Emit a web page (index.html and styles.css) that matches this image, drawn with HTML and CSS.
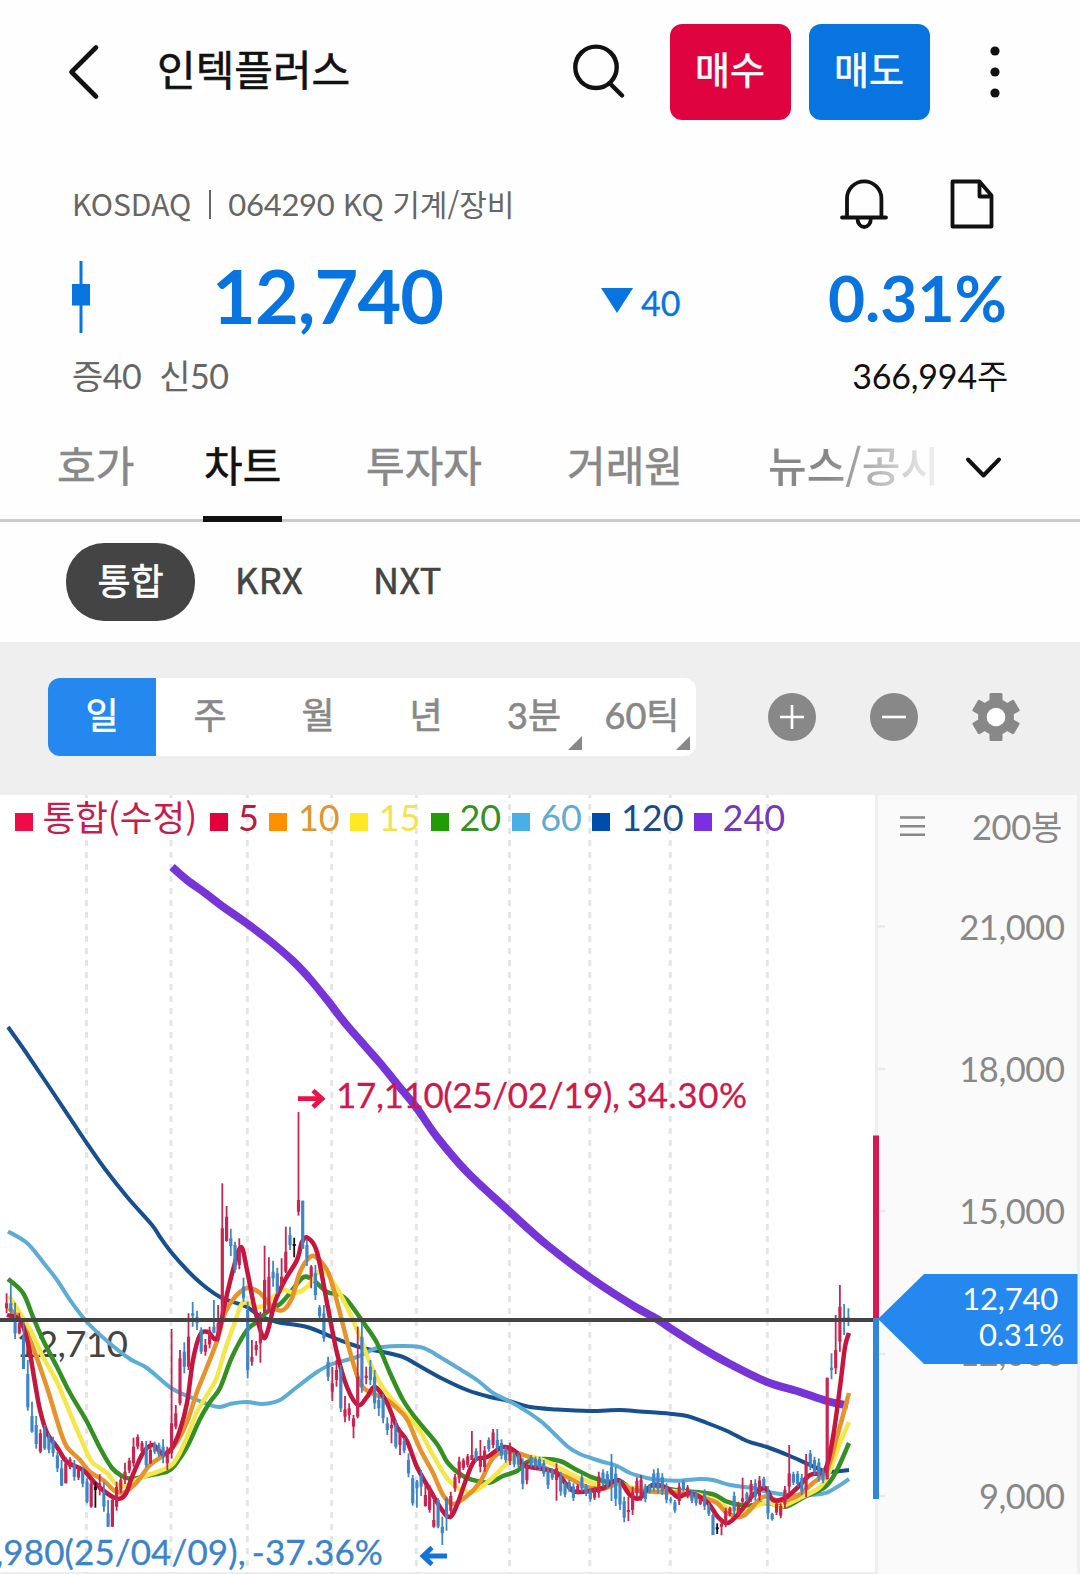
FILE: index.html
```html
<!DOCTYPE html>
<html lang="ko">
<head>
<meta charset="utf-8">
<title>인텍플러스</title>
<link rel="stylesheet" href="styles.css">
</head>
<body>
<header class="topbar">
  <svg class="back" width="32" height="56" viewBox="0 0 32 56"><path d="M28 3.500 3.500 28 28 52.500"/></svg>
  <h1 class="title">인텍플러스</h1>
  <svg class="search" width="54" height="56" viewBox="0 0 54 56"><circle cx="25" cy="23.300" r="20.700"/><path d="M38.500 39 51 51.500"/></svg>
  <button class="trade buy">매수</button>
  <button class="trade sell">매도</button>
  <svg class="more" width="10" height="54" viewBox="0 0 10 54"><circle cx="5" cy="6" r="4.600"/><circle cx="5" cy="27" r="4.600"/><circle cx="5" cy="48" r="4.600"/></svg>
</header>

<section class="quote">
  <div class="meta">
    <span class="market">KOSDAQ</span><i class="bar"></i><span><span class="num">064290</span> KQ 기계/장비</span>
    <div class="meta-icons">
      <svg width="48" height="52" viewBox="0 0 48 52"><path d="M7 39.500V20.500a17.200 17.200 0 0 1 34.400 0V39.500M2 39.500H46M17.500 40.500c0 5 3 8.500 6.700 8.500s6.700-3.500 6.700-8.500"/></svg>
      <svg width="44" height="52" viewBox="0 0 44 52"><path d="M2.500 3.500H29.500L41.500 17.500V48.500H2.500ZM29.500 3.500V18.500H41.500"/></svg>
    </div>
  </div>
  <div class="price-row">
    <svg class="candle" width="18" height="72" viewBox="0 0 18 72"><path d="M7.500 0h3v23h7.500v21.500h-7.500V72h-3V44.500H0V23h7.500z"/></svg>
    <span class="price">12,740</span>
    <span class="change"><svg width="32" height="25" viewBox="0 0 32 25"><path d="M0 0h32L16 25z"/></svg>40</span>
    <span class="rate">0.31%</span>
  </div>
  <div class="volume-row">
    <span class="margin"><span>증<b>40</b></span><span>신<b>50</b></span></span>
    <span class="volume"><b>366,994</b>주</span>
  </div>
</section>

<nav class="tabs">
  <a class="tab t1">호가</a>
  <a class="tab t2 active">차트</a>
  <a class="tab t3">투자자</a>
  <a class="tab t4">거래원</a>
  <a class="tab t5 fade">뉴스/공시</a>
  <svg class="expand" width="38" height="24" viewBox="0 0 38 24"><path d="M3 3.500 18.500 19.500 34 3.500"/></svg>
</nav>

<div class="exchanges">
  <span class="pill">통합</span><span class="ex krx">KRX</span><span class="ex nxt">NXT</span>
</div>

<div class="toolbar">
  <div class="periods">
    <span class="on">일</span><span>주</span><span>월</span><span>년</span>
    <span class="drop"><b>3</b>분</span><span class="drop"><b>60</b>틱</span>
  </div>
  <svg width="48" height="48" viewBox="0 0 48 48"><circle cx="24" cy="24" r="24" fill="#888"/><path d="M12 24H36M24 12V36" stroke="#fff" stroke-width="2.600"/></svg>
  <svg width="48" height="48" viewBox="0 0 48 48"><circle cx="24" cy="24" r="24" fill="#888"/><path d="M12 24H36" stroke="#fff" stroke-width="2.600"/></svg>
  <svg width="48" height="48" viewBox="0 0 48 48"><g fill="#888"><circle cx="24" cy="24" r="18"/><g id="tooth"><path d="M17.500 1.500q0-1.500 1.500-1.500h10q1.500 0 1.500 1.500V8H17.500z"/><path d="M17.500 46.500q0 1.500 1.500 1.500h10q1.500 0 1.500-1.500V40H17.500z"/></g><use href="#tooth" transform="rotate(60 24 24)"/><use href="#tooth" transform="rotate(120 24 24)"/></g><circle cx="24" cy="24" r="9.300" fill="#fff"/></svg>
</div>

<main class="chart">
  <svg class="plot" width="1080" height="779" viewBox="0 795 1080 779">
    <rect x="878" y="795" width="199" height="779" fill="#fafafa"/>
    <path d="M876.500 795V1574M1078.500 795V1574" stroke="#efefef" stroke-width="3.200"/>
    <path d="M0 1573H875" stroke="#eee" stroke-width="2"/>
    <path d="M878 926.500h7M878 1069h7M878 1211h7M878 1354h7M878 1496h7" stroke="#e9e9e9" stroke-width="2.500"/>
    <path class="grid" d="M86.500 792V1574M171 792V1574M247.300 792V1574M331.700 792V1574M416.300 792V1574M509.400 792V1574M589.800 792V1574M670.200 792V1574M767.300 792V1574"/>
    <text class="last" x="16" y="1357" textLength="112">12,710</text>
    <g id="averages"></g>
    <g id="candles"></g>
    <path d="M0 1320H876" stroke="#444" stroke-width="4"/>
    <path d="M876 1135.500V1318" stroke="#d8174f" stroke-width="6"/>
    <path d="M876 1318V1499" stroke="#3086d8" stroke-width="6"/>
    <path d="M298 1098.700H321M313 1090.500 322 1098.700 313 1107" fill="none" stroke="#ea1348" stroke-width="4.800"/>
    <text class="mark up" y="1108"><tspan x="336" textLength="284">17,110(25/02/19),</tspan><tspan x="627" textLength="120">34.30%</tspan></text>
    <path d="M447 1556H424M432 1547.500 423 1556 432 1564.500" fill="none" stroke="#1273dc" stroke-width="4.800"/>
    <text class="mark down" x="383" y="1564.500" text-anchor="end">7,980(25/04/09), -37.36%</text>
    <g class="axis">
      <text x="1064.500" y="939.500">21,000</text>
      <text x="1064.500" y="1081.500">18,000</text>
      <text x="1064.500" y="1223.500">15,000</text>
      <text x="1064.500" y="1366">12,000</text>
      <text x="1064.500" y="1508.500">9,000</text>
      <text x="1062" y="840">200<tspan class="kr">봉</tspan></text>
    </g>
    <path d="M900 817.500h25M900 826.200h25M900 834.800h25" stroke="#888" stroke-width="2.500"/>
    <path d="M878 1319 924 1274H1077.500V1364H924Z" fill="#2488ee"/>
    <text class="tag" x="1058" y="1310">12,740</text>
    <text class="tag" x="1064" y="1346">0.31%</text>
  </svg>
  <div class="legend">
    <span class="c0 kr">통합(수정)</span><span class="c5">5</span><span class="c10">10</span><span class="c15">15</span><span class="c20">20</span><span class="c60">60</span><span class="c120">120</span><span class="c240">240</span>
  </div>
</main>
<script src="chart.js"></script>
</body>
</html>
```
FILE: styles.css
```css
* { box-sizing: border-box; }
body {
  margin: 0;
  width: 1080px;
  height: 1574px;
  overflow: hidden;
  background: #fefefe;
  color: #111;
  font-family: "Noto Sans CJK KR", sans-serif;
}
svg { display: block; flex: none; }
b, .num { font-family: Lato, sans-serif; font-weight: inherit; }

/* Medium weight: the regular face with a thin outline */
.title, .trade, .tabs, .exchanges, .periods { font-weight: 400; -webkit-text-stroke: 0.600px; }

.topbar { display: flex; align-items: center; height: 144px; padding-left: 68px; }
.back, .search { fill: none; stroke: #111; stroke-width: 4.600; stroke-linecap: round; stroke-linejoin: round; }
.title { margin: 0 0 8px 57px; width: 414px; font-size: 42px; line-height: 60px; white-space: nowrap; }
.search { stroke-width: 4.400; }
.trade {
  width: 121px; height: 96px; padding: 0 1px 9px 0; border: 0; border-radius: 12px;
  color: #fff; font-size: 38px; font-family: "Noto Sans CJK KR", sans-serif;
}
.buy { margin-left: 45px; background: #df043f; }
.sell { margin-left: 18px; background: #0774e0; }
.more { margin-left: 60px; fill: #111; }

.quote { height: 286px; padding: 33px 73px 0 72px; }
.meta { display: flex; align-items: center; height: 54px; font-size: 30px; color: #666; white-space: nowrap; }
.meta > span { margin-top: -3px; }
.bar { width: 2px; height: 29px; margin: 0 17px 0 18px; background: #666; }
.meta-icons { display: flex; gap: 62px; margin-left: auto; margin-right: 13px; }
.num { font-size: 31px; letter-spacing: -0.300px; }
.meta-icons svg { fill: none; stroke: #111; stroke-width: 3.800; stroke-linecap: round; stroke-linejoin: round; }

.price-row { display: flex; align-items: center; height: 96px; margin-top: 16px; color: #0774e0; font-family: Lato, sans-serif; line-height: 1; }
.candle { margin-top: 3px; fill: #0774e0; }
.price { width: 389px; margin-left: 122px; font-size: 75.500px; font-weight: 700; letter-spacing: -0.900px; }
.change { display: flex; align-items: center; gap: 8px; margin-top: 15px; font-size: 34px; -webkit-text-stroke: 0.300px; }
.change svg { margin-top: -4px; fill: #0774e0; }
.rate { margin-left: auto; margin-top: 5px; font-size: 64px; font-weight: 700; }

.volume-row { display: flex; justify-content: space-between; height: 60px; margin-top: 4px; line-height: 56px; font-size: 34px; }
.margin { display: flex; gap: 18px; color: #666; letter-spacing: -0.500px; }
.volume { letter-spacing: -0.200px; margin-right: -1px; }

.tabs { position: relative; display: flex; height: 92px; border-bottom: 3px solid #ccc; padding-left: 57px; font-size: 42px; line-height: 67px; color: #888; white-space: nowrap; }
.tab { height: 92px; }
.t1 { width: 146px; }
.t2 { width: 79px; margin-right: 84px; padding-left: 1px; color: #111; border-bottom: 6px solid #111; }
.t3 { width: 201px; }
.t4 { width: 201px; }
.fade { width: 170px; font-weight: 500; color: transparent; -webkit-text-stroke: 0; background: linear-gradient(90deg, #888 35%, #f2f2f2 100%); -webkit-background-clip: text; background-clip: text; }
.expand { margin: 26px 0 0 27px; fill: none; stroke: #111; stroke-width: 4; stroke-linecap: round; stroke-linejoin: round; }

.exchanges { display: flex; align-items: center; height: 120px; padding: 0 66px 0; font-size: 36px; color: #444; }
.pill { width: 129px; height: 78px; border-radius: 38px; background: #444; color: #fff; line-height: 72px; text-align: center; }
.ex { line-height: 72px; padding-bottom: 8px; letter-spacing: 0.500px; }
.krx { width: 138px; margin-left: 40px; }

.toolbar { display: flex; align-items: center; height: 153px; padding: 0 0 3px 48px; background: #efefef; }
.periods { display: flex; width: 648px; height: 78px; margin-right: 72px; border-radius: 12px; overflow: hidden; background: #fff; color: #888; font-size: 36px; line-height: 71px; text-align: center; }
.periods span { position: relative; flex: 1; }
.periods .on { background: #2488ee; color: #fff; }
.drop::after { content: ""; position: absolute; right: 6px; bottom: 6px; border: 7px solid transparent; border-right-color: #888; border-bottom-color: #888; }
.toolbar > svg + svg { margin-left: 54px; }

.chart { position: relative; height: 779px; background: #fff; }
.grid { fill: none; stroke: #e5e5e5; stroke-width: 3; stroke-dasharray: 6 6; }
.plot text { font-family: Lato, sans-serif; }
.plot .kr { font-family: "Noto Sans CJK KR", sans-serif; }
.last { font-size: 37px; fill: #444; }
.mark { font-size: 35px; stroke-width: 0.300; word-spacing: -3px; }
.up { fill: #cb1b4c; stroke: #cb1b4c; }
.down { fill: #3c83c8; stroke: #3c83c8; letter-spacing: 0.100px; }
.axis { font-size: 34.500px; fill: #888; text-anchor: end; letter-spacing: -0.450px; }
.tag { font-size: 31px; fill: #fff; text-anchor: end; letter-spacing: -0.200px; }
#averages path { fill: none; stroke-width: 4; stroke-linejoin: round; }

.legend { position: absolute; left: 15px; top: 0; display: flex; gap: 10.500px; height: 48px; line-height: 45px; font-family: Lato, sans-serif; font-size: 36px; white-space: nowrap; }
.legend span { display: flex; align-items: flex-start; gap: 10.500px; letter-spacing: 0; }
.legend span::before { content: ""; width: 18px; height: 18px; margin-top: 18px; background: var(--sq, currentColor); }
.legend .kr { width: 184px; gap: 9.500px; font-family: "Noto Sans CJK KR", sans-serif; font-size: 35.500px; line-height: 41px; }
.c0 { color: #c41e4e; --sq: #ee0b48; }
.c5 { color: #b91c42; --sq: #e2003b; }
.c10 { color: #e0962f; --sq: #ff9100; }
.c15 { color: #f2e44e; --sq: #ffe924; }
.c20 { color: #359023; --sq: #229c06; }
.c60 { color: #5fabd3; --sq: #48b0e4; }
.c120 { color: #184c8a; --sq: #004cab; }
.c240 { color: #7438bb; --sq: #7a30e0; }
```
FILE: chart.js
```js
const NS = 'http://www.w3.org/2000/svg';

function add(parent, d, stroke, width) {
  const p = document.createElementNS(NS, 'path');
  p.setAttribute('d', d);
  p.setAttribute('stroke', stroke);
  p.style.strokeWidth = width;
  parent.appendChild(p);
}

// Smooth curve through the points (Catmull-Rom as cubic segments).
function smooth(text) {
  const p = text.trim().split(/\s+/).map(s => s.split(',').map(Number));
  let d = 'M' + p[0];
  for (let i = 0; i < p.length - 1; i++) {
    const a = p[i - 1] || p[i], b = p[i], c = p[i + 1], e = p[i + 2] || c;
    d += 'C' + [b[0] + (c[0] - a[0]) / 6, b[1] + (c[1] - a[1]) / 6,
      c[0] - (e[0] - b[0]) / 6, c[1] - (e[1] - b[1]) / 6, c[0], c[1]].map(v => v.toFixed(1));
  }
  return d;
}

const averages = [
  ['#7734d6', 8, '172,867 187,880 205,893 222,906 247,923.5 270,941 293,961 310,979 328,1001 345,1023 365,1046 380,1063 397,1084 416,1107 437,1137 467,1172 510,1212 547,1245 592,1279 632,1305 657,1319 670,1328 700,1347 730,1364 767,1382 800,1392 827,1401 848,1405.5'],
  ['#174f8f', 4, '8,1027 25,1051 50,1088 86,1142 105,1169 128,1198 152,1225 160,1237 171,1252 187,1270 203,1285 220,1297 233,1302 247,1307 260,1316 277,1322 307,1327 332,1337 350,1344 367,1349 383,1352 403,1357 416,1364 443,1379 467,1390 490,1397 509,1401 530,1407 557,1409.5 590,1411 620,1410 640,1411.5 670,1413.7 687,1416 707,1423 727,1431 747,1441 767,1447 790,1456 810,1465 827,1471.5 849,1470'],
  ['#5dacd6', 4, '8,1231.5 27,1243 43,1262 57,1280 70,1300 86,1321 107,1341 130,1359 147,1368 171,1388 190,1397 210,1405 220,1407 232,1403.5 247,1402 263,1404 280,1400 297,1387 317,1372 332,1364 357,1357 377,1348 400,1346 420,1347 430,1351 440,1357 458,1368 477,1380 493,1393 509,1401 523,1409 543,1423 567,1446 580,1454 600,1461 617,1466 630,1473 647,1478 660,1480 680,1480.7 700,1479 713,1480 730,1485 753,1488 767,1491.7 790,1495 817,1494.5 827,1492.5 837,1487 849,1479'],
  ['#359023', 4.5, '8,1279 23,1293 33,1317 43,1340 57,1367 70,1393 86,1420 100,1448 112,1468 122,1476 132,1479 147,1475.7 167,1471.7 175,1465 187,1447 200,1419 210,1402 220,1388 232,1357 247,1330 257,1322 267,1312 280,1304 290,1293 303,1277.5 313,1280 327,1292 338,1294 347,1300 363,1322 377,1343 390,1373 403,1400 417,1420 437,1444 448,1463 463,1476 477,1481 490,1482.5 503,1476 517,1471 527,1462 543,1459 560,1461 577,1470 593,1477.7 607,1481.7 620,1481 630,1487.7 643,1489 657,1487.5 680,1490.7 712,1494 727,1501.7 747,1505.7 767,1502.7 785,1506.7 803,1497.7 825,1487 837,1470 849,1443'],
  ['#f5e64a', 4.5, '9,1296 20,1313 32,1333 43,1357 57,1382 72,1418 87,1453 93,1463 107,1473 115,1483 125,1486 140,1478 167,1468 177,1458 187,1437 197,1412 210,1390 217,1377 225,1350 235,1322 243,1303 260,1307 272,1298 283,1290 295,1293 307,1287 317,1273 325,1272 333,1282 347,1307 360,1337 370,1363 383,1388 400,1408 418,1428 433,1455 447,1478 460,1489 473,1492 490,1480 507,1463 515,1456 533,1457 550,1463 567,1472 587,1481 607,1487 620,1484 633,1488 653,1490 673,1491 700,1495 717,1502 730,1509 747,1510 767,1502 780,1507 800,1498 820,1487 830,1470 840,1443 849,1422'],
  ['#e5932a', 4.5, '9,1308 20,1320 30,1340 40,1367 50,1397 60,1430 67,1447 80,1460 90,1472 103,1480 115,1491 125,1492 137,1482 150,1465 167,1453 177,1442 187,1422 197,1392 207,1367 217,1341 225,1313 235,1297 247,1288 260,1293 272,1307 283,1310 292,1298 300,1272 310,1257 317,1258 327,1270 333,1287 340,1313 350,1352 360,1383 370,1392 387,1400 400,1411 408,1421 420,1449 433,1473 443,1495 453,1504 467,1496 480,1482 493,1458 507,1452 527,1456 543,1467 567,1477 587,1487 603,1489 620,1483 633,1490 660,1492 677,1493 703,1498 717,1503 727,1513 743,1516 763,1497 780,1501 797,1496 813,1483 827,1470 837,1437 849,1393'],
  ['#c4163f', 4.5, '7,1315 20,1320 28,1343 35,1383 40,1410 47,1433 57,1447 67,1462 83,1470 97,1485 115,1498 125,1495 132,1477 143,1453 153,1445 163,1454 172,1448 180,1430 187,1403 193,1360 200,1335 208,1332 217,1338 225,1303 233,1270 241,1247 247,1270 255,1310 263,1337 268,1330 275,1302 285,1280 297,1260 302,1242 308,1238 317,1252 327,1303 337,1353 347,1387 358,1405 367,1397 375,1387 387,1403 397,1427 407,1441 417,1467 430,1490 442,1510 450,1517 457,1505 467,1477 475,1460 487,1457 503,1447 517,1453 523,1465 543,1469 557,1473 567,1485 577,1492 603,1488 618,1480 630,1495 640,1498 652,1485 667,1488 678,1497 690,1493 707,1502 718,1517 728,1523 740,1512 753,1495 765,1488 773,1500 785,1498 797,1488 810,1475 825,1470 833,1437 840,1387 845,1347 849,1333'],
];
const averageLayer = document.getElementById('averages');
for (const [color, width, points] of averages) add(averageLayer, smooth(points), color, width);

// One entry per day: direction (r up, b down, k flat), high, low[, body top, body bottom].
// Heights are thirds of a pixel below y = 1170.
const days = `r,370,430,400,415 b,340,432,400,425 b,398,507,450,490 r,428,493,460,490 b,455,597,500,597
b,570,722,612,712 b,695,788,738,785 b,738,836,765,822 r,778,850,790,845 b,765,840,780,835
b,790,850 b,800,860 b,845,906 b,870,947,895,947 r,862,940,880,940
r,862,898 b,870,932 r,890,930 b,890,952 b,925,1000,935,995
r,930,1013,940,1010 k,937,1013,950,960 r,913,976,940,960 b,937,1025,965,1010 b,990,1070,1030,1070
r,985,1070,990,1070 r,935,1022,950,1010 r,920,970 r,878,942,905,930 r,863,910
r,803,890,830,880 r,793,838 r,813,850 b,813,892,830,885 r,812,882,840,880
b,815,852 b,818,860 b,808,880,830,860 r,830,900,840,880 r,477,866,760,850
r,705,778,730,770 r,540,706,565,700 b,517,610,545,590 r,430,600,500,590 b,396,470,430,437
b,422,480,440,460 b,472,552,480,545 r,507,557,525,545 r,470,535 b,390,490,470,488
r,405,515,460,510 r,40,440,175,430 r,108,215,140,213 b,176,258,205,228 b,215,308,225,300
r,205,298,240,285 b,323,395,350,385 b,395,625,420,600 r,510,587,560,575 r,513,557,525,540
r,425,578,440,520 r,227,430,330,430 r,262,430,320,420 b,272,350,305,325 b,293,372,310,365
r,265,350,320,345 r,170,310,245,305 b,170,240,195,225 k,203,262,222,228 r,-174,137,90,125
b,92,236,92,236 b,210,288,225,265 r,285,355,290,320 b,285,390,310,375 b,405,445
b,405,515,430,505 b,560,633,575,620 r,590,693,640,665 r,570,650,600,630 b,585,726,600,715
r,678,757,718,740 r,700,752,715,735 r,735,805,745,770 r,470,745,620,740 b,460,668,500,650
r,590,643,617,624 b,570,645,590,630 b,600,717,620,700 b,672,738,690,715 b,672,760,690,745
b,742,795,760,780 r,740,820,765,775 b,750,836,765,830 r,775,855,790,825 b,805,850
b,850,922,870,910 b,915,1007,925,1000 b,930,1013,935,955 b,900,978,915,950 r,945,1010,975,1008
r,945,1028,960,1020 r,970,1073,1050,1070 b,985,1075,990,1070 b,1040,1125,1070,1090 b,980,1082,985,1045
r,965,1035 r,912,965 r,860,940 r,865,900 r,852,892
r,783,870,855,870 b,835,877 r,810,907,870,890 r,828,905 b,802,845
r,777,835 b,777,845,810,835 b,808,868 b,830,878 r,818,885
b,845,892 b,848,892 b,865,958 r,875,943 b,855,892
b,860,895 b,860,900 b,870,920 b,892,957 b,895,930
r,880,992,895,930 b,905,977 b,935,982 b,930,965 b,940,993
r,942,973 b,913,965 b,942,978 b,955,995 r,950,990
r,905,983 b,898,950 b,903,955 b,852,993,890,930 b,890,1008
b,930,1020 b,980,1057 r,980,1053,1020,1026 r,950,1035 r,922,980
r,915,992 b,942,997 b,942,970 b,898,965 b,895,970
b,910,975 b,940,1000 b,980,1000,988,992 b,990,1028 r,938,1005
b,930,965 r,945,985 b,960,1000 b,960,1007 r,985,1005
b,958,1020 b,1000,1038 b,1030,1095,1035,1095 k,1060,1092,1072,1078 r,1050,1096,1062,1070
r,1013,1072 r,1010,1038 b,965,1035 r,995,1040 r,923,1000,985,995
b,965,995 r,930,995 b,928,992 r,918,992 b,920,955
b,948,1048 b,1028,1052 r,995,1035 r,1000,1045 r,948,1015
r,825,972,910,950 b,905,945 b,903,950 b,912,975 r,852,982
b,840,900 b,860,915 b,865,935 b,895,940 r,623,928,623,928
b,550,628,593,600 r,435,612,540,595 r,345,545,410,515 b,402,495,442,450 b,415,468,442,455`.split(/\s+/);

const colors = { r: '#c92552', b: '#3f86c9', k: '#111' };
const candleLayer = document.getElementById('candles');
days.forEach((day, i) => {
  const [kind, ...v] = day.split(',');
  const [high, low] = v.map(Number);
  const inset = (low - high) * 0.18;
  const top = v.length > 2 ? +v[2] : high + inset;
  const bottom = v.length > 2 ? +v[3] : low - inset;
  const x = (6.6 + i * 4.23).toFixed(1);
  const y = n => (1170 + n / 3).toFixed(1);
  add(candleLayer, `M${x} ${y(high)}V${y(low)}`, colors[kind], 1.8);
  add(candleLayer, `M${x} ${y(top)}V${y(bottom)}`, colors[kind], 3.2);
});
```
